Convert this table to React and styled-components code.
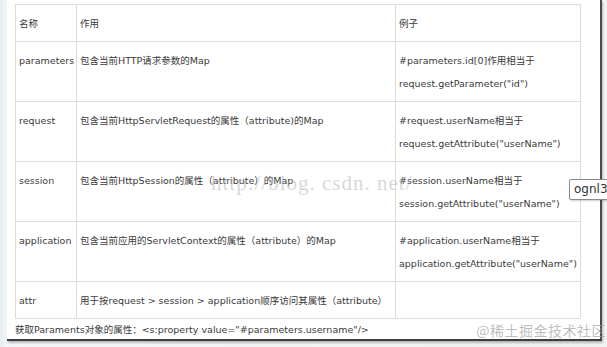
import React from 'react'
import styled, { createGlobalStyle } from 'styled-components'

const GlobalStyle = createGlobalStyle`
  html, body {
    margin: 0;
    padding: 0;
    background: #eef2f3;
    font-family: "DejaVu Sans", "Noto Sans CJK SC", sans-serif;
  }
`

const rows = [
  {
    name: 'parameters',
    use: '包含当前HTTP请求参数的Map',
    example: ['#parameters.id[0]作用相当于', 'request.getParameter("id")'],
  },
  {
    name: 'request',
    use: '包含当前HttpServletRequest的属性（attribute)的Map',
    example: ['#request.userName相当于', 'request.getAttribute("userName")'],
  },
  {
    name: 'session',
    use: '包含当前HttpSession的属性（attribute）的Map',
    example: ['#session.userName相当于', 'session.getAttribute("userName")'],
  },
  {
    name: 'application',
    use: '包含当前应用的ServletContext的属性（attribute）的Map',
    example: ['#application.userName相当于', 'application.getAttribute("userName")'],
  },
  {
    name: 'attr',
    use: '用于按request > session > application顺序访问其属性（attribute）',
    example: [],
  },
]

const App = () => {
  return (
    <>
      <GlobalStyle />
      <Page>
        <Panel>
          <Table>
            <colgroup>
              <col style={{ width: 61 }} />
              <col style={{ width: 319 }} />
              <col style={{ width: 185 }} />
            </colgroup>
            <thead>
              <tr>
                <Cell>名称</Cell>
                <Cell>作用</Cell>
                <Cell>例子</Cell>
              </tr>
            </thead>
            <tbody>
              {rows.map((r) => (
                <tr key={r.name}>
                  <Cell $tall={r.example.length > 0}>{r.name}</Cell>
                  <Cell>{r.use}</Cell>
                  <Cell>
                    {r.example.map((line) => (
                      <Line key={line}>{line}</Line>
                    ))}
                  </Cell>
                </tr>
              ))}
            </tbody>
          </Table>
          <Caption>获取Paraments对象的属性：&lt;s:property value="#parameters.username"/&gt;</Caption>
          <Watermark>http://blog. csdn. net/</Watermark>
          <Juejin>@稀土掘金技术社区</Juejin>
        </Panel>
        <Tooltip>ognl3</Tooltip>
      </Page>
    </>
  )
}

const Page = styled.div`
  position: relative;
  width: 607px;
  height: 347px;
  overflow: hidden;
  background: linear-gradient(90deg, #e6eef1 0, #f4f7f8 7px, #f1f2f2 100%);
`

const Panel = styled.div`
  position: relative;
  margin-left: 7px;
  width: 595px;
  height: 341px;
  box-sizing: border-box;
  padding: 4px 0 0 8px;
  background: #fff;
  border-right: 2px solid #4a4a4a;
  border-bottom: 2px solid #3e3e3e;
  box-shadow: 1px 2px 2px rgba(0, 0, 0, 0.25);
`

const Table = styled.table`
  width: 566px;
  border-collapse: collapse;
  table-layout: fixed;
  color: #3a3a3a;
  font-size: 9.5px;
`

const Cell = styled.td`
  border: 1px solid #dcdcdc;
  padding: 7px 3px 6px;
  line-height: 23px;
  vertical-align: top;
  white-space: nowrap;
  height: ${(p) => (p.$tall ? '46px' : '23px')};
`

const Line = styled.div`
  line-height: 23px;
`

const Caption = styled.div`
  font-size: 9.5px;
  line-height: 22px;
  color: #3a3a3a;
  white-space: nowrap;
`

const Watermark = styled.div`
  position: absolute;
  left: 204px;
  top: 171px;
  font-family: "Liberation Serif", "DejaVu Serif", serif;
  font-size: 21px;
  letter-spacing: 1px;
  color: rgba(175, 175, 175, 0.5);
  pointer-events: none;
`

const Juejin = styled.div`
  position: absolute;
  right: -6px;
  top: 320px;
  font-family: "Noto Sans CJK SC", serif;
  font-size: 14px;
  letter-spacing: 0.5px;
  color: rgba(160, 160, 160, 0.7);
`

const Tooltip = styled.div`
  position: absolute;
  left: 569px;
  top: 179px;
  padding: 0 4px;
  height: 19px;
  line-height: 19px;
  font-size: 12px;
  color: #333;
  background: #fff;
  border: 1px solid #8a8a8a;
  border-radius: 2px;
  box-shadow: 1px 1px 2px rgba(0, 0, 0, 0.2);
`

export default App
